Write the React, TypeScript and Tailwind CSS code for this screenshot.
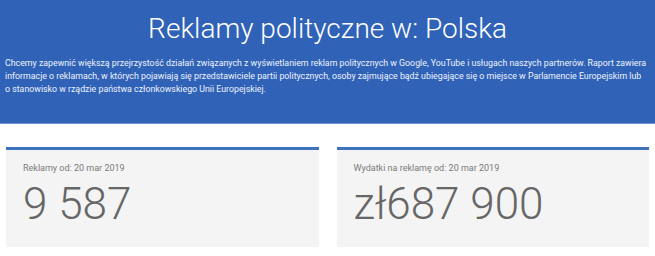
import React from 'react';

const stats = [
  { label: 'Reklamy od: 20 mar 2019', value: '9 587' },
  { label: 'Wydatki na reklamę od: 20 mar 2019', value: 'zł687 900' },
];

const App = () => {
  return (
    <div className="w-[655px] h-[256px] bg-white overflow-hidden font-['Roboto',sans-serif]">
      <div className="h-[124px] bg-[#3062b8] border-b border-[#6f95d4] text-white">
        <h1 className="pt-[12px] text-center text-[28px] font-light leading-[34px]">
          Reklamy polityczne w: Polska
        </h1>
        <p className="mt-[11px] px-[5px] text-[8.8px] leading-[13px] text-[#eef3fb] whitespace-nowrap">
          Chcemy zapewnić większą przejrzystość działań związanych z wyświetlaniem reklam politycznych w Google, YouTube i usługach naszych partnerów. Raport zawiera
          <br />
          informacje o reklamach, w których pojawiają się przedstawiciele partii politycznych, osoby zajmujące bądź ubiegające się o miejsce w Parlamencie Europejskim lub
          <br />
          o stanowisko w rządzie państwa członkowskiego Unii Europejskiej.
        </p>
      </div>
      <div className="mt-[23px] px-[6px] flex gap-[18px]">
        {stats.map((s, i) => (
          <div key={i} className="flex-1 h-[100px] bg-[#f4f4f4] border-t-[3px] border-[#3f72bd] px-[17px]">
            <div className="pt-[12px] text-[9px] leading-[12px] text-[#7a7a7a]">{s.label}</div>
            <div className="mt-[6px] text-[44px] font-light leading-[48px] text-[#666666]">{s.value}</div>
          </div>
        ))}
      </div>
    </div>
  );
};

export default App;
